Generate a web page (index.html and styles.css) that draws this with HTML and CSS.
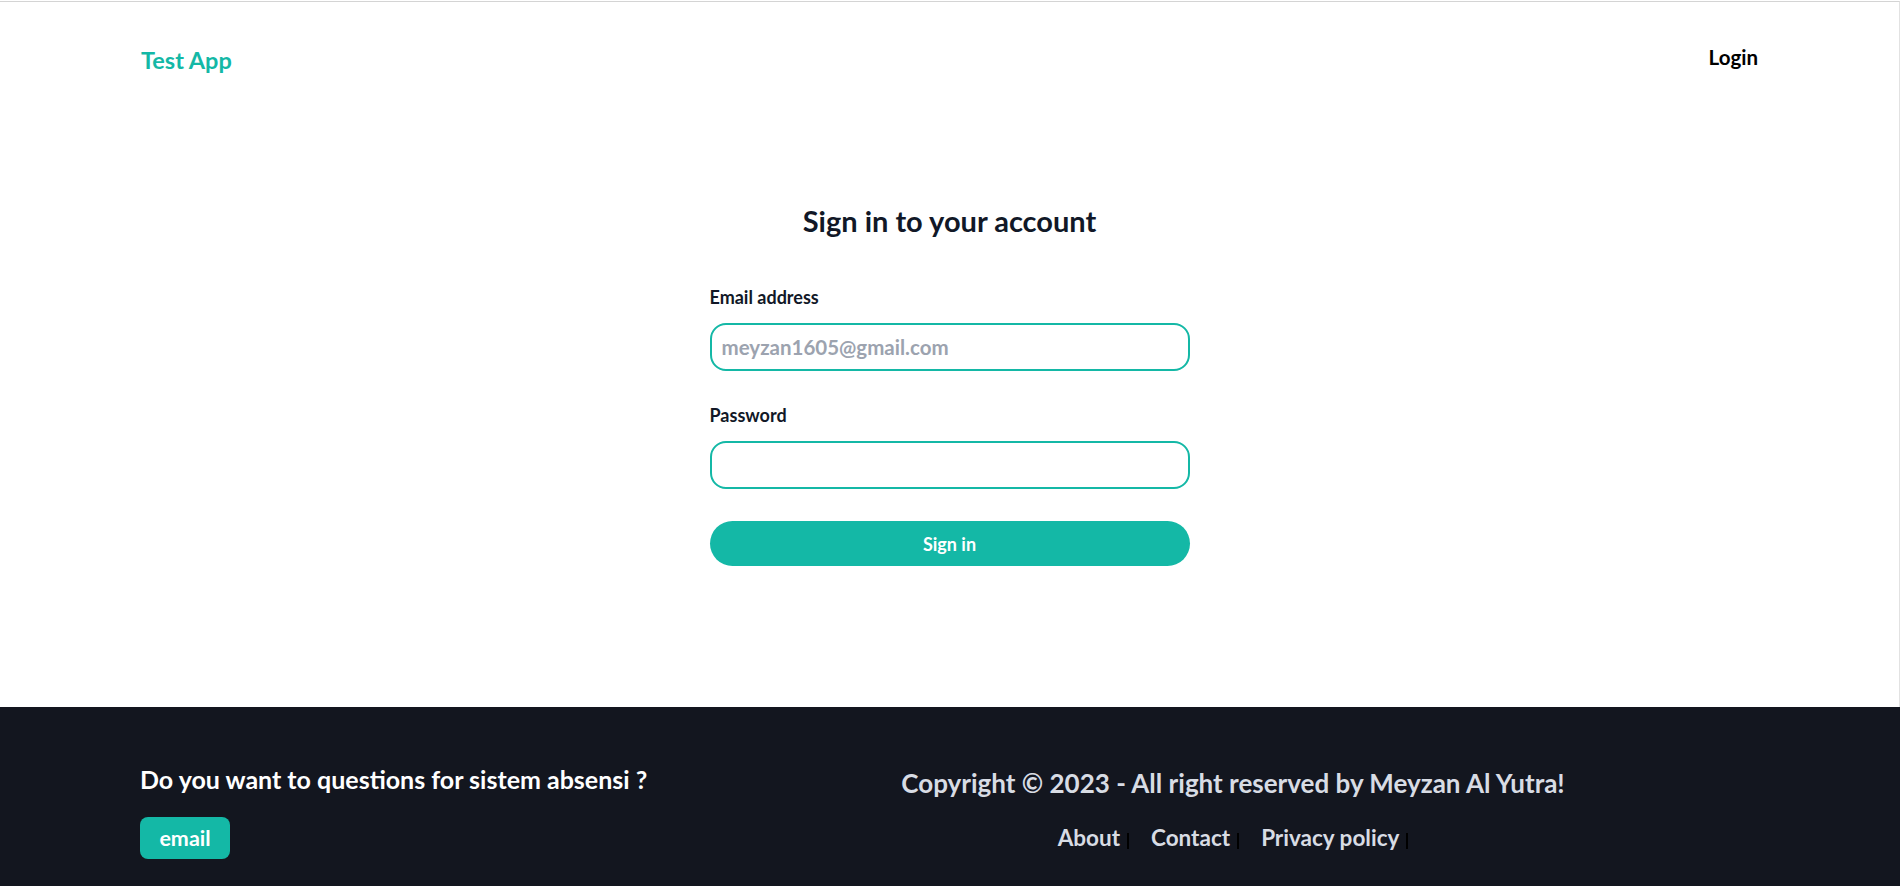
FILE: index.html
```html
<!DOCTYPE html>
<html lang="en">
<head>
<meta charset="utf-8">
<title>Test App</title>
<link rel="stylesheet" href="styles.css">
</head>
<body>
<div class="page">
  <header class="topbar">
    <a class="brand" href="#">Test App</a>
    <a class="nav-login" href="#">Login</a>
  </header>
  <main class="main">
    <form class="signin">
      <h1 class="title">Sign in to your account</h1>
      <div class="field">
        <label class="label" for="email">Email address</label>
        <input class="input" id="email" type="email" placeholder="meyzan1605@gmail.com">
      </div>
      <div class="field field-pw">
        <label class="label" for="pw">Password</label>
        <input class="input" id="pw" type="password">
      </div>
      <button class="btn-signin" type="button">Sign in</button>
    </form>
  </main>
</div>
<footer class="footer">
  <div class="footer-left">
    <p class="question">Do you want to questions for sistem absensi ?</p>
    <a class="btn-email" href="#">email</a>
  </div>
  <div class="footer-right">
    <p class="copyright">Copyright © 2023 - All right reserved by Meyzan Al Yutra!</p>
    <nav class="links">
      <a href="#">About</a><span class="sep"></span>
      <a href="#">Contact</a><span class="sep"></span>
      <a href="#">Privacy policy</a><span class="sep"></span>
    </nav>
  </div>
</footer>
</body>
</html>
```
FILE: styles.css
```css
* { box-sizing: border-box; }
html, body { margin: 0; padding: 0; }
body {
  font-family: "Lato", "Liberation Sans", sans-serif;
  background: #fff;
  color: #111827;
}
a { text-decoration: none; }
p { margin: 0; }

.page {
  margin-top: 1px;
  border-top: 1px solid #d4d4d4;
  border-right: 1px solid #e2e2e2;
  height: 706px;
}

.topbar {
  display: flex;
  justify-content: space-between;
  align-items: flex-start;
  padding: 42px 141px 0 141px;
}
.brand {
  color: #14b8a6;
  font-weight: 700;
  font-size: 23.5px;
  line-height: 32px;
}
.nav-login {
  color: #000;
  font-weight: 700;
  font-size: 20.5px;
  line-height: 26px;
}

.main {
  display: flex;
  justify-content: center;
  padding-top: 127px;
}
.signin {
  width: 480px;
  display: flex;
  flex-direction: column;
}
.title {
  margin: 0 0 46px 0;
  text-align: center;
  font-size: 29px;
  line-height: 36px;
  font-weight: 700;
  color: #111827;
}
.field { display: flex; flex-direction: column; }
.field-pw { margin-top: 32px; }
.label {
  font-size: 18px;
  line-height: 24px;
  font-weight: 700;
  color: #111827;
  margin-bottom: 14px;
}
.input {
  height: 48px;
  border: 2px solid #14b8a6;
  border-radius: 16px;
  padding: 0 10px;
  font-family: inherit;
  font-size: 20.5px;
  font-weight: 700;
  color: #111827;
  background: #fff;
  outline: none;
}
.input::placeholder { color: #9ca3af; }
.btn-signin {
  margin-top: 32px;
  height: 45px;
  border: none;
  border-radius: 23px;
  background: #14b8a6;
  color: #fff;
  font-family: inherit;
  font-size: 18px;
  font-weight: 700;
}

.footer {
  background: #13161f;
  height: 180px;
  display: grid;
  grid-template-columns: 566px 1fr;
  padding: 57px 140px 0 140px;
}
.question {
  color: #fff;
  font-size: 25px;
  line-height: 30px;
  font-weight: 700;
}
.btn-email {
  display: inline-flex;
  align-items: center;
  justify-content: center;
  margin-top: 23px;
  width: 90px;
  height: 42px;
  border-radius: 8px;
  background: #14b8a6;
  color: #fff;
  font-size: 21.5px;
  font-weight: 700;
}
.footer-right {
  display: flex;
  flex-direction: column;
  align-items: center;
}
.copyright {
  color: #d8dce4;
  font-size: 26px;
  line-height: 32px;
  font-weight: 700;
  margin-top: 3px;
}
.links {
  margin-top: 25px;
  display: flex;
  align-items: baseline;
}
.links a {
  color: #d8dce4;
  font-size: 22.5px;
  line-height: 28px;
  font-weight: 700;
}
.sep {
  display: inline-block;
  width: 2px;
  height: 16px;
  background: #000;
  margin: 0 22px 0 7px;
  position: relative;
  top: 3px;
}
.sep:last-child { margin-right: 0; }
```
